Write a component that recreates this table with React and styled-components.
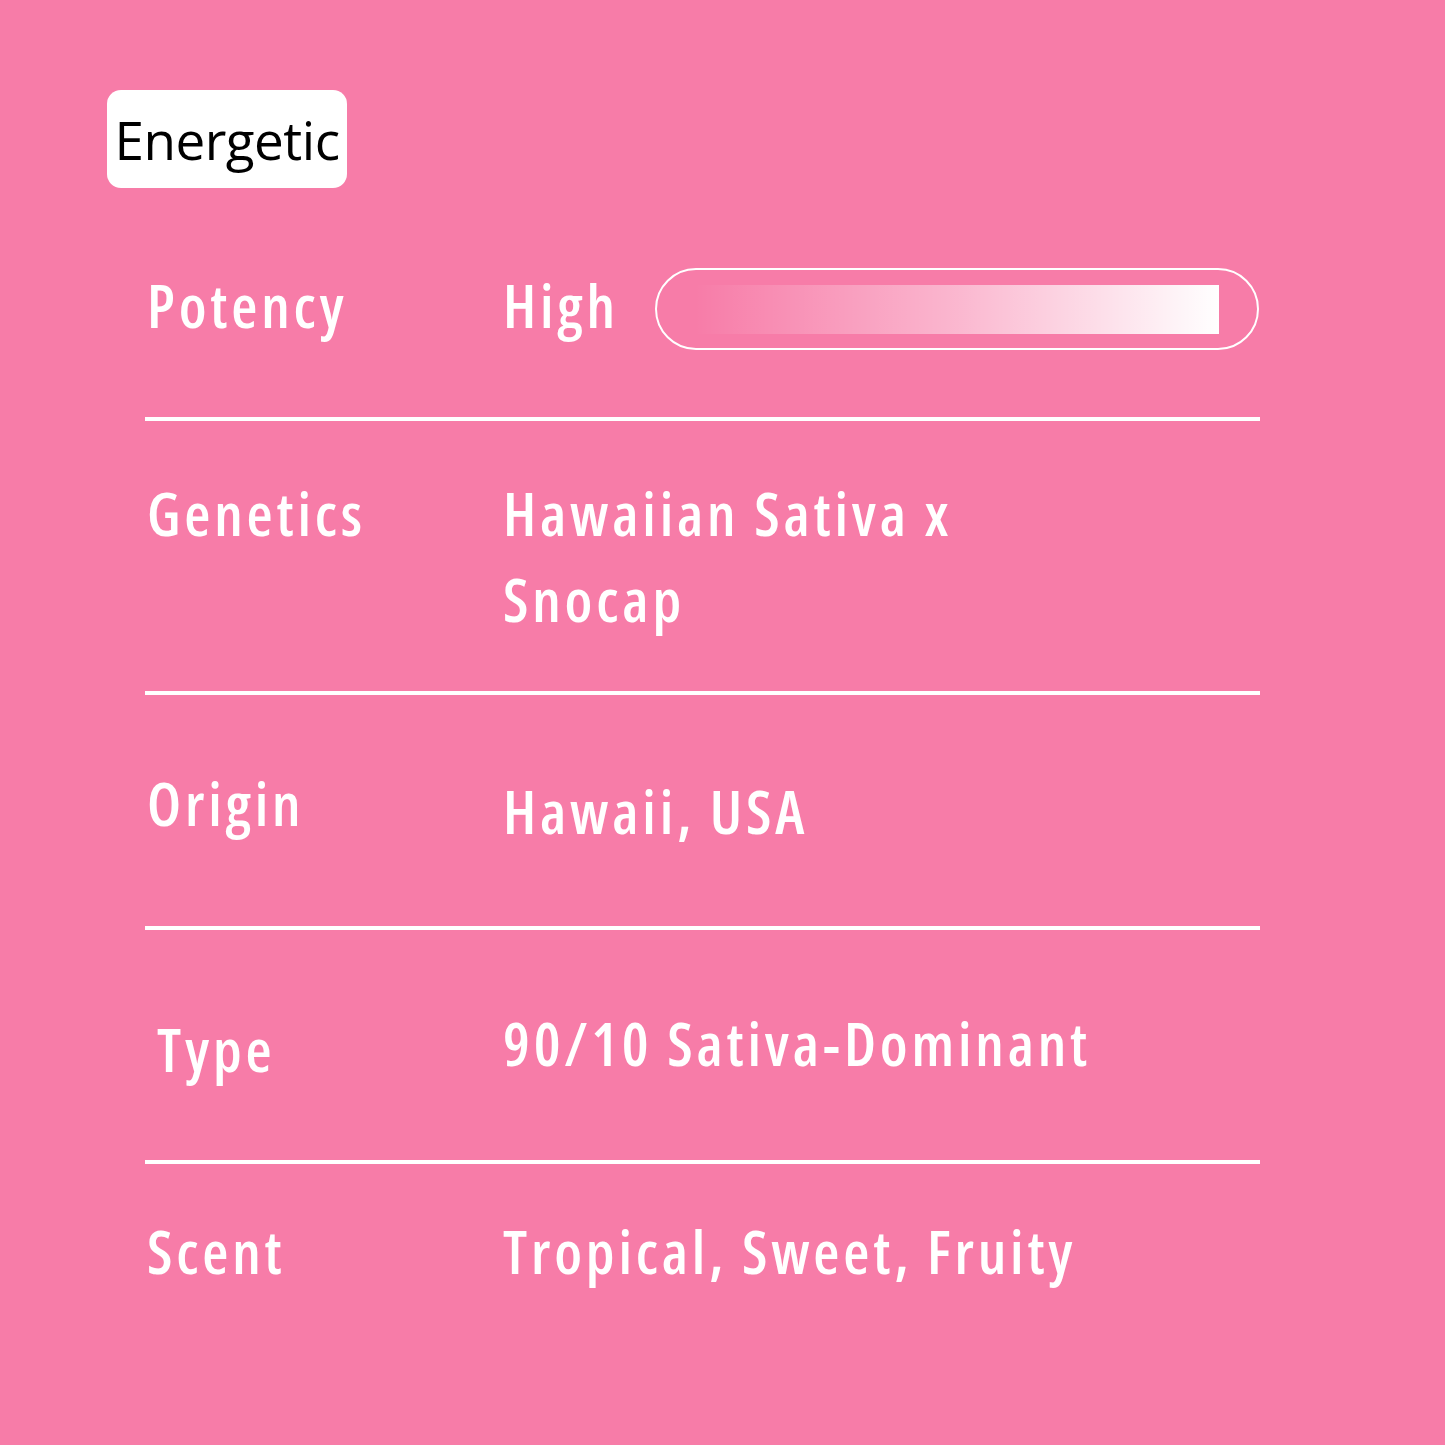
import React from 'react';
import styled, { createGlobalStyle } from 'styled-components';

const GlobalStyle = createGlobalStyle`
  html, body {
    margin: 0;
    padding: 0;
    background: #f77ca8;
  }
`;

const Page = styled.main`
  width: 1445px;
  height: 1445px;
  box-sizing: border-box;
  padding: 90px 0 0 107px;
  background: #f77ca8;
  font-family: 'Open Sans', 'Noto Sans', sans-serif;
  font-stretch: 75%;
  color: #fff;
`;

const Badge = styled.div`
  display: inline-flex;
  align-items: center;
  justify-content: center;
  width: 240px;
  height: 98px;
  border-radius: 14px;
  background: #fff;
  color: #000;
  font-size: 53px;
  font-weight: 400;
  font-stretch: 100%;
  letter-spacing: -0.5px;
`;

const Table = styled.section`
  width: 1115px;
  margin: 11px 0 0 38px;
`;

const Row = styled.div`
  display: grid;
  grid-template-columns: 358px 1fr;
  align-content: center;
  align-items: center;
  height: ${(p) => p.$h}px;
  border-bottom: ${(p) => (p.$last ? 'none' : '4px solid #fff')};
`;

const Label = styled.div`
  align-self: ${(p) => (p.$top ? 'start' : 'center')};
  margin-top: ${(p) => p.$dy || 0}px;
  padding-left: ${(p) => p.$indent || 2}px;
  font-size: 60px;
  font-weight: 600;
  letter-spacing: 3.8px;
  line-height: 86px;
`;

const Value = styled.div`
  display: flex;
  align-items: center;
  gap: 36px;
  margin-top: ${(p) => p.$dy || 0}px;
  font-size: 60px;
  font-weight: 600;
  letter-spacing: 3.8px;
  line-height: 86px;
`;

const Track = styled.div`
  width: 604px;
  height: 82px;
  margin-top: 8px;
  box-sizing: border-box;
  border: 2.5px solid #fff;
  border-radius: 41px;
  padding: 14px 38px 14px 38px;
  display: flex;
  align-items: center;
`;

const Fill = styled.div`
  width: ${(p) => p.$pct}%;
  height: 49px;
  background: linear-gradient(to right, rgba(255, 255, 255, 0), rgba(255, 255, 255, 0.45) 50%, #fff 100%);
`;

const rows = [
  { label: 'Potency', value: 'High', h: 218, bar: 100, labelDy: -6, valueDy: -6 },
  { label: 'Genetics', value: ['Hawaiian Sativa x', 'Snocap'], h: 270, top: true },
  { label: 'Origin', value: 'Hawaii, USA', h: 231, labelDy: -16, valueDy: 0 },
  { label: 'Type', value: '90/10 Sativa-Dominant', h: 230, indent: 12, labelDy: 8, valueDy: -4 },
  { label: 'Scent', value: 'Tropical, Sweet, Fruity', h: 180, last: true, labelDy: -6, valueDy: -6 },
];

export default function App() {
  return (
    <Page>
      <GlobalStyle />
      <Badge>Energetic</Badge>
      <Table>
        {rows.map((r) => (
          <Row key={r.label} $h={r.h} $last={r.last}>
            <Label $top={r.top} $indent={r.indent} $dy={r.labelDy}>
              {r.label}
            </Label>
            <Value $dy={r.valueDy}>
              {Array.isArray(r.value) ? (
                <div>
                  {r.value.map((line) => (
                    <div key={line}>{line}</div>
                  ))}
                </div>
              ) : (
                <span>{r.value}</span>
              )}
              {r.bar && (
                <Track>
                  <Fill $pct={r.bar} />
                </Track>
              )}
            </Value>
          </Row>
        ))}
      </Table>
    </Page>
  );
}
